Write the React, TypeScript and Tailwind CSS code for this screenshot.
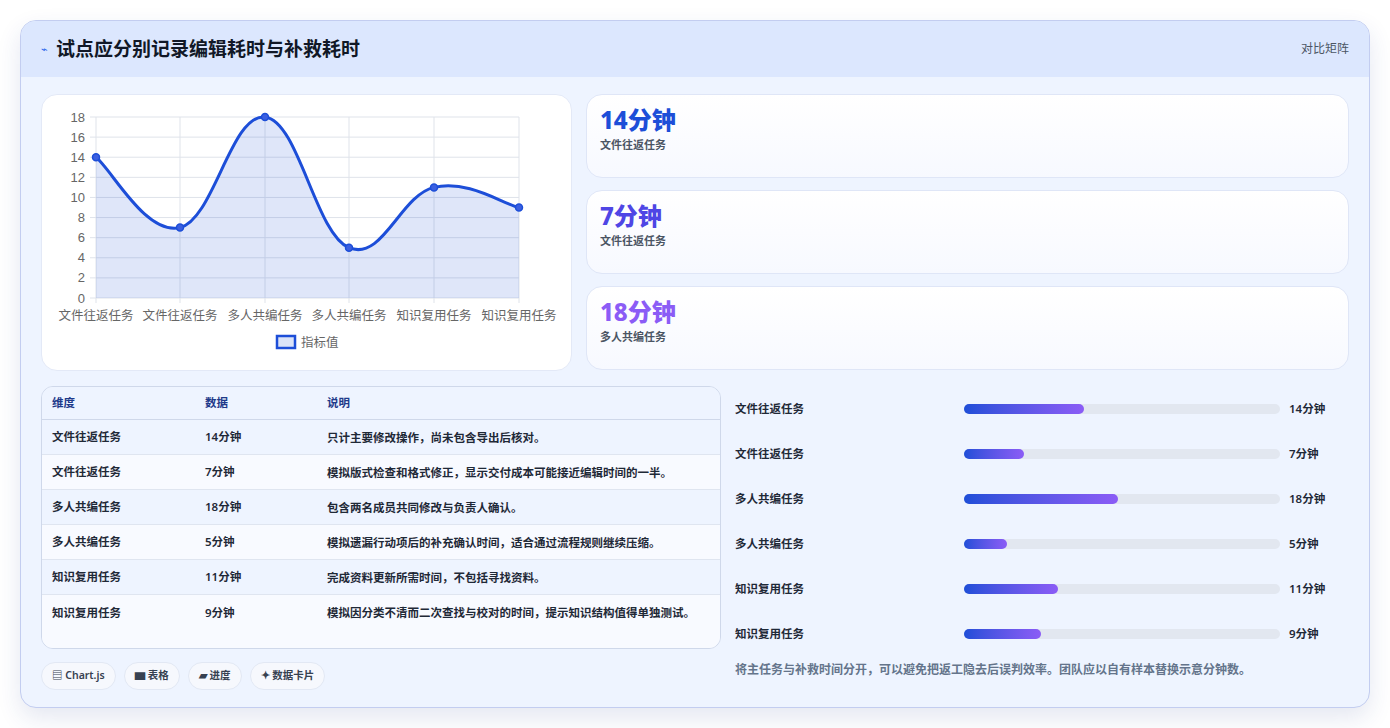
import React from "react";

const font = { fontFamily: '"Noto Sans","Noto Sans CJK SC",sans-serif' };
const labels = ["文件往返任务","文件往返任务","多人共编任务","多人共编任务","知识复用任务","知识复用任务"];
const vals = [14,7,18,5,11,9];
const xs = [54,138,223,307,392,477];
const y = (v:number)=>203 - v*181/18;

function curve(){
  const p = xs.map((x,i)=>[x,y(vals[i])]);
  let d = `M${p[0][0]},${p[0][1]}`;
  const t = 0.4;
  for(let i=0;i<p.length-1;i++){
    const p0=p[Math.max(0,i-1)],p1=p[i],p2=p[i+1],p3=p[Math.min(p.length-1,i+2)];
    const c1=[p1[0]+(p2[0]-p0[0])*t/2,p1[1]+(p2[1]-p0[1])*t/2];
    const c2=[p2[0]-(p3[0]-p1[0])*t/2,p2[1]-(p3[1]-p1[1])*t/2];
    d+=` C${c1[0]},${c1[1]} ${c2[0]},${c2[1]} ${p2[0]},${p2[1]}`;
  }
  return d;
}

function Chart(){
  const d = curve();
  return (
    <svg width="531" height="277" style={{fontFamily:'"Liberation Sans",Arial,"Noto Sans CJK SC",sans-serif'}}>
      {[0,2,4,6,8,10,12,14,16,18].map(v=>(
        <g key={v}>
          <line x1={48} x2={477} y1={y(v)} y2={y(v)} stroke="#dfe3ea" />
          <text x={43} y={y(v)+4.5} textAnchor="end" fontSize="13" fill="#666">{v}</text>
        </g>
      ))}
      {xs.map((x,i)=>(<line key={i} x1={x} x2={x} y1={22} y2={208} stroke="#dfe3ea"/>))}
      <path d={`${d} L477,203 L54,203 Z`} fill="rgba(29,78,216,0.14)"/>
      <path d={d} fill="none" stroke="#1d4ed8" strokeWidth="3"/>
      {xs.map((x,i)=>(<circle key={i} cx={x} cy={y(vals[i])} r="3.5" fill="#3b5fe0" stroke="#1d4ed8" strokeWidth="1.5"/>))}
      {xs.map((x,i)=>(<text key={i} x={x} y={225} textAnchor="middle" fontSize="12.5" fill="#666">{labels[i]}</text>))}
      <rect x={235} y={241} width={18} height={12} fill="#dbe3f8" stroke="#1d4ed8" strokeWidth="2.5"/>
      <text x={259} y={252} fontSize="12.5" fill="#666">指标值</text>
    </svg>
  );
}

const rows = [
  ["文件往返任务","14分钟","只计主要修改操作，尚未包含导出后核对。"],
  ["文件往返任务","7分钟","模拟版式检查和格式修正，显示交付成本可能接近编辑时间的一半。"],
  ["多人共编任务","18分钟","包含两名成员共同修改与负责人确认。"],
  ["多人共编任务","5分钟","模拟遗漏行动项后的补充确认时间，适合通过流程规则继续压缩。"],
  ["知识复用任务","11分钟","完成资料更新所需时间，不包括寻找资料。"],
  ["知识复用任务","9分钟","模拟因分类不清而二次查找与校对的时间，提示知识结构值得单独测试。"],
];

export default function App(){
  return (
    <div className="w-[1390px] h-[728px] bg-white p-5" style={font}>
      <div className="rounded-2xl border border-[#c3cdf0] bg-[#eef4ff] overflow-hidden h-[688px] shadow-[0_10px_24px_rgba(30,60,140,0.12)]">
        <div className="h-[56px] bg-[#dce7fe] flex items-center justify-between px-5">
          <div className="flex items-center gap-2">
            <span className="text-[#2563eb] text-[11px]">⌁</span>
            <span className="text-[19px] font-bold text-[#111827]">试点应分别记录编辑耗时与补救耗时</span>
          </div>
          <span className="text-[12px] text-[#4b5563]">对比矩阵</span>
        </div>
        <div className="px-5 pt-[17px]">
          <div className="flex gap-[14px]">
            <div className="w-[531px] h-[277px] bg-white rounded-2xl border border-[#e3e9f7]"><Chart/></div>
            <div className="flex-1 flex flex-col gap-[12px]">
              {[["14分钟","文件往返任务","text-[#1d4ed8]"],["7分钟","文件往返任务","text-[#4f46e5]"],["18分钟","多人共编任务","text-[#8b5cf6]"]].map(([a,b,c],i)=>(
                <div key={i} className="h-[84px] rounded-2xl border border-[#dfe6f7] bg-gradient-to-b from-white to-[#f7f9ff] px-[13px] pt-[9px]">
                  <div className={`text-[24px] font-extrabold leading-[32px] ${c}`}>{a}</div>
                  <div className="text-[11px] font-semibold text-[#4b5563] mt-[1px]">{b}</div>
                </div>
              ))}
            </div>
          </div>
          <div className="flex gap-[14px] mt-[15px]">
            <div className="w-[680px]">
              <div className="rounded-xl border border-[#cfd8ea] overflow-hidden text-[11.5px] font-semibold text-[#1f2937]">
                <div className="flex h-[33px] items-center bg-[#eef4ff] text-[#1e3a8a] border-b border-[#cfd8ea]">
                  <div className="w-[163px] pl-[10px]">维度</div><div className="w-[122px]">数据</div><div className="flex-1">说明</div>
                </div>
                {rows.map((r,i)=>(
                  <div key={i} className={`flex ${i===5?"h-[53px] pt-[9px]":"h-[35px] items-center border-b border-[#dfe5f0]"} ${i%2===0?"bg-[#eef4ff]":"bg-[#f8faff]"}`}>
                    <div className="w-[163px] pl-[10px]">{r[0]}</div><div className="w-[122px]">{r[1]}</div><div className="flex-1 pr-[12px] leading-[17px]">{r[2]}</div>
                  </div>
                ))}
              </div>
              <div className="flex gap-[8px] mt-[13px]">
                {["▤ Chart.js","▆ 表格","▰ 进度","✦ 数据卡片"].map(t=>(
                  <span key={t} className="h-[28px] px-[10px] rounded-full bg-[#f6f8fd] border border-[#e2e8f4] text-[10.5px] font-semibold text-[#374151] flex items-center">{t}</span>
                ))}
              </div>
            </div>
            <div className="flex-1 pl-[0px] pr-[20px]">
              {rows.map((r,i)=>(
                <div key={i} className="flex items-center h-[45px] text-[11.5px] font-semibold text-[#1f2937]">
                  <div className="w-[229px]">{r[0]}</div>
                  <div className="w-[316px] h-[10px] rounded-full bg-[#e2e7f0]">
                    <div className="h-full rounded-full bg-gradient-to-r from-[#1d4ed8] to-[#8b5cf6]" style={{width:`${vals[i]*100/37}%`}}/>
                  </div>
                  <div className="ml-[9px]">{r[1]}</div>
                </div>
              ))}
              <div className="mt-[5px] text-[12px] font-semibold text-[#64748b]">将主任务与补救时间分开，可以避免把返工隐去后误判效率。团队应以自有样本替换示意分钟数。</div>
            </div>
          </div>
        </div>
      </div>
    </div>
  );
}
